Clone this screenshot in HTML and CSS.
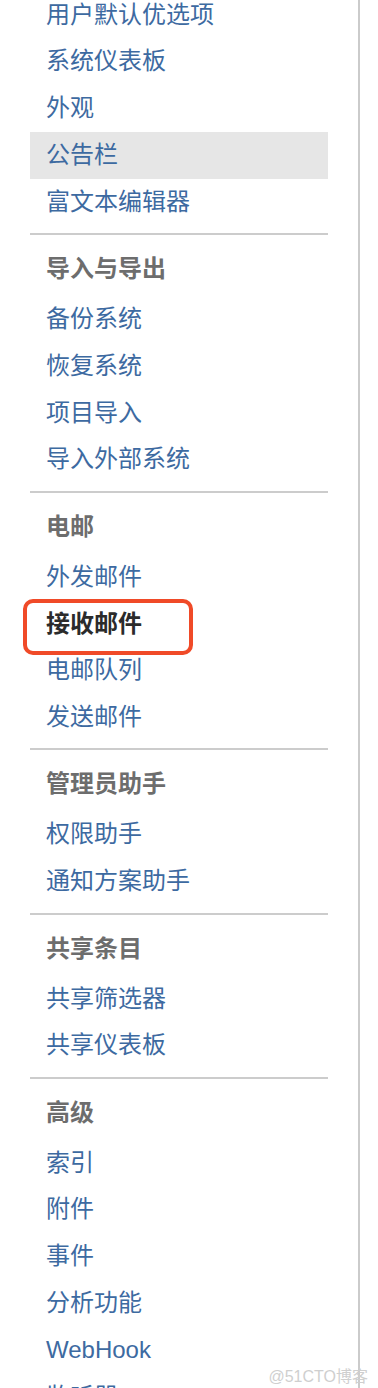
FILE: index.html
```html
<!DOCTYPE html>
<html lang="zh-CN">
<head>
<meta charset="utf-8">
<title>管理</title>
<link rel="stylesheet" href="styles.css">
</head>
<body>
<div class="page">
  <nav class="sidebar">
    <ul class="menu menu-first">
      <li class="item"><a href="#">用户默认优选项</a></li>
      <li class="item"><a href="#">系统仪表板</a></li>
      <li class="item"><a href="#">外观</a></li>
      <li class="item active"><a href="#">公告栏</a></li>
      <li class="item"><a href="#">富文本编辑器</a></li>
    </ul>
    <div class="section">
      <h3 class="section-title">导入与导出</h3>
      <ul class="menu">
        <li class="item"><a href="#">备份系统</a></li>
        <li class="item"><a href="#">恢复系统</a></li>
        <li class="item"><a href="#">项目导入</a></li>
        <li class="item"><a href="#">导入外部系统</a></li>
      </ul>
    </div>
    <div class="section">
      <h3 class="section-title">电邮</h3>
      <ul class="menu">
        <li class="item"><a href="#">外发邮件</a></li>
        <li class="item selected"><a href="#">接收邮件</a><span class="annotation"></span></li>
        <li class="item"><a href="#">电邮队列</a></li>
        <li class="item"><a href="#">发送邮件</a></li>
      </ul>
    </div>
    <div class="section">
      <h3 class="section-title">管理员助手</h3>
      <ul class="menu">
        <li class="item"><a href="#">权限助手</a></li>
        <li class="item"><a href="#">通知方案助手</a></li>
      </ul>
    </div>
    <div class="section">
      <h3 class="section-title">共享条目</h3>
      <ul class="menu">
        <li class="item"><a href="#">共享筛选器</a></li>
        <li class="item"><a href="#">共享仪表板</a></li>
      </ul>
    </div>
    <div class="section">
      <h3 class="section-title">高级</h3>
      <ul class="menu">
        <li class="item"><a href="#">索引</a></li>
        <li class="item"><a href="#">附件</a></li>
        <li class="item"><a href="#">事件</a></li>
        <li class="item"><a href="#">分析功能</a></li>
        <li class="item"><a href="#">WebHook</a></li>
        <li class="item"><a href="#">监听器</a></li>
      </ul>
    </div>
  </nav>
  <div class="watermark">@51CTO博客</div>
</div>
</body>
</html>
```
FILE: styles.css
```css
html, body {
  margin: 0;
  padding: 0;
  height: 1388px;
  overflow: hidden;
  background: #ffffff;
}

body {
  font-family: "Liberation Sans", "Noto Sans CJK SC", sans-serif;
}

.page {
  position: relative;
  height: 1388px;
}

.sidebar {
  width: 298px;
  height: 100%;
  padding: 0 30px;
  border-right: 2px solid #cbcbcb;
  overflow: hidden;
}

.menu {
  list-style: none;
  margin: 0;
  padding: 0;
}

.menu-first {
  margin-top: -8.4px;
}

.item {
  position: relative;
}

.item a {
  display: block;
  height: 46.8px;
  line-height: 46.8px;
  padding-left: 16px;
  font-size: 24px;
  color: #3d6aa1;
  text-decoration: none;
  white-space: nowrap;
}

.item.active a {
  background: #e6e6e6;
}

.item.selected a {
  color: #2b2b2b;
  font-weight: bold;
}

.annotation {
  position: absolute;
  left: -7px;
  top: -1.3px;
  width: 170px;
  height: 55.7px;
  box-sizing: border-box;
  border: 4px solid #f04a28;
  border-radius: 10px;
  pointer-events: none;
}

.section {
  margin-top: 7.5px;
  padding-top: 11px;
  border-top: 2px solid #cccccc;
}

.section-title {
  margin: 0;
  height: 50px;
  line-height: 46.8px;
  padding-left: 16px;
  font-size: 24px;
  font-weight: bold;
  color: #6d6d6d;
}

.watermark {
  position: absolute;
  right: 10px;
  bottom: 3px;
  font-size: 16px;
  line-height: 16px;
  color: #cfcfcf;
  white-space: nowrap;
}
```
